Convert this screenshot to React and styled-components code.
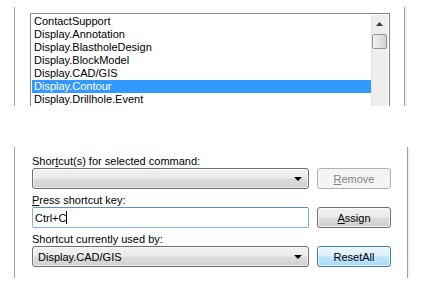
import React from 'react';
import styled, { createGlobalStyle } from 'styled-components';

const GlobalStyle = createGlobalStyle`
  html, body {
    margin: 0;
    padding: 0;
    background: #ffffff;
    overflow: hidden;
  }
  body {
    font-family: "Liberation Sans", Arial, sans-serif;
    font-size: 11px;
    color: #000;
  }
`;

const Page = styled.div`
  width: 421px;
  height: 284px;
  display: flex;
  flex-direction: column;
  padding-top: 7px;
  box-sizing: border-box;
`;

const Panel = styled.div`
  margin-left: 14px;
  margin-top: ${(p) => p.$top || 0}px;
  width: ${(p) => p.$width}px;
  height: ${(p) => p.$height}px;
  border-left: 1px solid #a0a0a0;
  border-right: 1px solid #a0a0a0;
  box-shadow: 2px 0 0 #f2f2f2;
  box-sizing: border-box;
  overflow: hidden;
  padding: ${(p) => p.$pad};
`;

const ListBox = styled.div`
  width: 360px;
  height: 120px;
  border: 1px solid #828790;
  box-sizing: border-box;
  display: flex;
  padding: 1px 1px 0 1px;
  background: #fff;
`;

const Items = styled.div`
  flex: 1;
  display: flex;
  flex-direction: column;
`;

const Item = styled.div`
  height: 13px;
  line-height: 13px;
  padding-left: 2px;
  white-space: nowrap;
  background: ${(p) => (p.$selected ? '#3399ff' : 'transparent')};
  color: ${(p) => (p.$selected ? '#ffffff' : '#000000')};
`;

const ScrollBar = styled.div`
  width: 17px;
  background: linear-gradient(to right, #e3e3e3 0px, #eeeeee 2px, #f0f0f0 100%);
  display: flex;
  flex-direction: column;
  align-items: center;
`;

const ArrowUp = styled.div`
  width: 17px;
  height: 17px;
  display: flex;
  align-items: center;
  justify-content: center;
`;

const Thumb = styled.div`
  width: 15px;
  height: 15px;
  margin-top: 2px;
  box-sizing: border-box;
  border: 1px solid #979797;
  border-radius: 2px;
  background: linear-gradient(to right, #f0f0f0 0%, #e2e2e2 55%, #d0d0d0 100%);
`;

const Label = styled.div`
  height: 13px;
  line-height: 13px;
  margin-top: ${(p) => p.$top}px;
  white-space: nowrap;
  color: #000;
`;

const U = styled.span`
  text-decoration: underline;
`;

const Row = styled.div`
  display: grid;
  grid-template-columns: 277px 74px;
  column-gap: 8px;
  height: 21px;
`;

const Combo = styled.div`
  box-sizing: border-box;
  height: 21px;
  border: 1px solid #707070;
  border-radius: 3px;
  background: linear-gradient(to bottom, #f2f2f2 0%, #ebebeb 48%, #dddddd 52%, #cfcfcf 100%);
  box-shadow: inset 0 0 0 1px rgba(255, 255, 255, 0.6);
  display: flex;
  align-items: center;
  padding: 0 6px 0 5px;
  justify-content: space-between;
`;

const Caret = styled.div`
  width: 0;
  height: 0;
  border-left: 4px solid transparent;
  border-right: 4px solid transparent;
  border-top: 4px solid #000;
  margin-top: 1px;
`;

const TextInput = styled.div`
  box-sizing: border-box;
  height: 21px;
  border: 1px solid #7eb4ea;
  border-top-color: #5794bf;
  border-radius: 2px;
  background: #fff;
  display: flex;
  align-items: center;
  padding-left: 2px;
`;

const Cursor = styled.span`
  display: inline-block;
  width: 1px;
  height: 13px;
  background: #000;
`;

const Button = styled.div`
  box-sizing: border-box;
  height: 21px;
  border: 1px solid ${(p) => (p.$disabled ? '#adb2b5' : p.$default ? '#3c7fb1' : '#707070')};
  border-radius: 3px;
  display: flex;
  align-items: center;
  justify-content: center;
  color: ${(p) => (p.$disabled ? '#838383' : '#000')};
  background: ${(p) =>
    p.$disabled
      ? '#f4f4f4'
      : p.$default
      ? 'linear-gradient(to bottom, #eaf6fd 0%, #d9f0fc 48%, #bee6fd 52%, #a7d9f5 100%)'
      : 'linear-gradient(to bottom, #f2f2f2 0%, #ebebeb 48%, #dddddd 52%, #cfcfcf 100%)'};
  box-shadow: inset 0 0 0 1px ${(p) => (p.$disabled ? 'transparent' : 'rgba(255,255,255,0.7)')};
`;

const commands = [
  'ContactSupport',
  'Display.Annotation',
  'Display.BlastholeDesign',
  'Display.BlockModel',
  'Display.CAD/GIS',
  'Display.Contour',
  'Display.Drillhole.Event',
];

export default function App() {
  return (
    <Page>
      <GlobalStyle />
      <Panel $width={391} $height={99} $pad="6px 0 0 15px">
        <ListBox>
          <Items>
            {commands.map((c) => (
              <Item key={c} $selected={c === 'Display.Contour'}>
                {c}
              </Item>
            ))}
          </Items>
          <ScrollBar>
            <ArrowUp>
              <svg width="7" height="4" viewBox="0 0 7 4">
                <path d="M3.5 0 L7 4 L0 4 Z" fill="#3a3a3a" />
              </svg>
            </ArrowUp>
            <Thumb />
          </ScrollBar>
        </ListBox>
      </Panel>

      <Panel $width={394} $height={131} $top={41} $pad="0 0 0 17px">
        <Label $top={8}>
          Shor<U>t</U>cut(s) for selected command:
        </Label>
        <Row>
          <Combo>
            <span />
            <Caret />
          </Combo>
          <Button $disabled>
            <span>
              <U>R</U>emove
            </span>
          </Button>
        </Row>
        <Label $top={5}>
          <U>P</U>ress shortcut key:
        </Label>
        <Row>
          <TextInput>
            Ctrl+C
            <Cursor />
          </TextInput>
          <Button>
            <span>
              <U>A</U>ssign
            </span>
          </Button>
        </Row>
        <Label $top={5}>Shortcut currently used by:</Label>
        <Row>
          <Combo>
            <span>Display.CAD/GIS</span>
            <Caret />
          </Combo>
          <Button $default>ResetAll</Button>
        </Row>
      </Panel>
    </Page>
  );
}
